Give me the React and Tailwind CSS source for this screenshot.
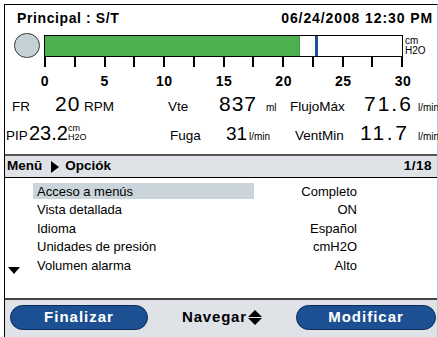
const ticks = Array.from({ length: 13 }, (_, i) => i);
const scale = ["0", "5", "10", "15", "20", "25", "30"];

const menuRows = [
  { label: "Acceso a menús", value: "Completo", active: true },
  { label: "Vista detallada", value: "ON" },
  { label: "Idioma", value: "Español" },
  { label: "Unidades de presión", value: "cmH2O" },
  { label: "Volumen alarma", value: "Alto", more: true },
];

function Cell({ w, className = "", children }) {
  return (
    <div className={`shrink-0 whitespace-nowrap ${className}`} style={w ? { width: w } : undefined}>
      {children}
    </div>
  );
}

export default function App() {
  return (
    <div className="w-[438px] h-[337px] bg-white pt-[4px] pl-[4px] overflow-hidden font-['Liberation_Sans',Arial,sans-serif] text-black">
      <div className="w-[434px] h-[333px] flex flex-col border-t border-l border-black border-r border-r-[#c4c4c4]">
        {/* Header */}
        <div className="h-[26px] shrink-0 flex items-center justify-between pl-[12px] pr-[4px] text-[14px] font-bold">
          <span className="tracking-[0.6px]">Principal : S/T</span>
          <span className="tracking-[0.9px]">06/24/2008 12:30 PM</span>
        </div>

        {/* Gauge */}
        <div className="h-[36px] shrink-0 flex items-start">
          <div className="ml-[9px] mt-[2px] w-[26px] h-[25px] rounded-full bg-[#c6d1d6] border border-[#3a3a3a]" />
          <div className="ml-[4px] w-[359px] flex flex-col">
            <div className="mt-[4px] h-[22px] border border-black flex bg-white">
              <div className="w-[255px] h-full bg-[#4caf50] border-r border-[#3f9a44]" />
              <div className="w-[15px]" />
              <div className="w-[3px] h-full bg-[#1d4f9a]" />
            </div>
            <div className="h-[10px] flex justify-between">
              {ticks.map((t) => (
                <div key={t} className="w-[2px] h-full bg-black" />
              ))}
            </div>
          </div>
          <div className="ml-[2px] mt-[5px] text-[10px] leading-[10px]">
            <div>cm</div>
            <div>H2O</div>
          </div>
        </div>

        {/* Scale labels */}
        <div className="h-[22px] shrink-0 pt-[6px] ml-[39px] w-[360px] flex justify-between text-[14px] leading-[16px] font-bold">
          {scale.map((s) => (
            <div key={s} className="w-[2px] flex justify-center">
              <span className="whitespace-nowrap tracking-[0.5px]">{s}</span>
            </div>
          ))}
        </div>

        {/* FR row */}
        <div className="h-[29px] shrink-0 flex items-center pl-[7px] text-[13.5px]">
          <div className="flex items-baseline">
            <Cell w={43}>FR</Cell>
            <Cell w={29} className="text-[21px] tracking-[1px]">20</Cell>
            <Cell w={84}>RPM</Cell>
            <Cell w={51}>Vte</Cell>
            <Cell w={47} className="text-[21px] tracking-[1px]">837</Cell>
            <Cell w={24} className="text-[10px]">ml</Cell>
            <Cell w={74}>FlujoMáx</Cell>
            <Cell w={54} className="text-[21px] tracking-[2px]">71.6</Cell>
            <Cell className="text-[10px]">l/min</Cell>
          </div>
        </div>

        {/* PIP row */}
        <div className="h-[30px] shrink-0 flex items-center pl-[1px] text-[13.5px]">
          <div className="flex items-baseline">
            <Cell w={23}>PIP</Cell>
            <Cell w={38} className="text-[20px]">23.2</Cell>
            <Cell w={103} className="text-[9px] leading-[9px] self-center pl-[1px]">
              <div>cm</div>
              <div>H2O</div>
            </Cell>
            <Cell w={56}>Fuga</Cell>
            <Cell w={22} className="text-[19px]">31</Cell>
            <Cell w={47} className="text-[10px] pl-[1px]">l/min</Cell>
            <Cell w={65}>VentMin</Cell>
            <Cell w={58} className="text-[21px] tracking-[2.5px]">11.7</Cell>
            <Cell className="text-[10px]">l/min</Cell>
          </div>
        </div>

        <div className="h-[6px] shrink-0" />

        {/* Menu header */}
        <div className="h-[24px] shrink-0 flex items-center justify-between pl-[2px] pr-[5px] bg-[#dfe3e7] border-t-2 border-t-[#555] border-b border-b-black text-[13.5px] font-bold">
          <div className="flex items-center">
            <span>Menū</span>
            <span className="ml-[9px] w-0 h-0 border-y-[6px] border-y-transparent border-l-[8px] border-l-black" />
            <span className="ml-[6px]">Opciók</span>
          </div>
          <span className="tracking-[0.5px]">1/18</span>
        </div>

        {/* Menu list */}
        <div className="h-[120px] shrink-0 pt-[4px] text-[13px] flex flex-col">
          {menuRows.map((r) => (
            <div key={r.label} className="h-[18.5px] flex items-center">
              <div className="w-[28px] h-full flex items-end justify-start pl-[3px] pb-[1px]">
                {r.more && (
                  <span className="w-0 h-0 border-x-[6px] border-x-transparent border-t-[7px] border-t-black" />
                )}
              </div>
              <div className={`w-[221px] h-[16px] flex items-center pl-[4px] ${r.active ? "bg-[#c9d5da]" : ""}`}>
                {r.label}
              </div>
              <div className="w-[103px] text-right">{r.value}</div>
            </div>
          ))}
        </div>

        {/* Bottom bar */}
        <div className="flex-1 bg-[#dfe3e7] border-t-2 border-t-[#444] flex items-start pt-[5px] pl-[5px]">
          <div className="w-[138px] h-[25px] rounded-full bg-[#1d4f93] border border-[#0b2a58] flex items-center justify-center text-white font-bold text-[15px] tracking-[1px]">
            Finalizar
          </div>
          <div className="w-[148px] h-[25px] flex items-center justify-center font-bold text-[15px] tracking-[0.8px]">
            Navegar
            <span className="ml-[1px] flex flex-col items-center gap-[1px]">
              <span className="w-0 h-0 border-x-[7px] border-x-transparent border-b-[7px] border-b-black" />
              <span className="w-0 h-0 border-x-[7px] border-x-transparent border-t-[7px] border-t-black" />
            </span>
          </div>
          <div className="w-[140px] h-[25px] rounded-full bg-[#1d4f93] border border-[#0b2a58] flex items-center justify-center text-white font-bold text-[15px] tracking-[1px]">
            Modificar
          </div>
        </div>
      </div>
    </div>
  );
}
